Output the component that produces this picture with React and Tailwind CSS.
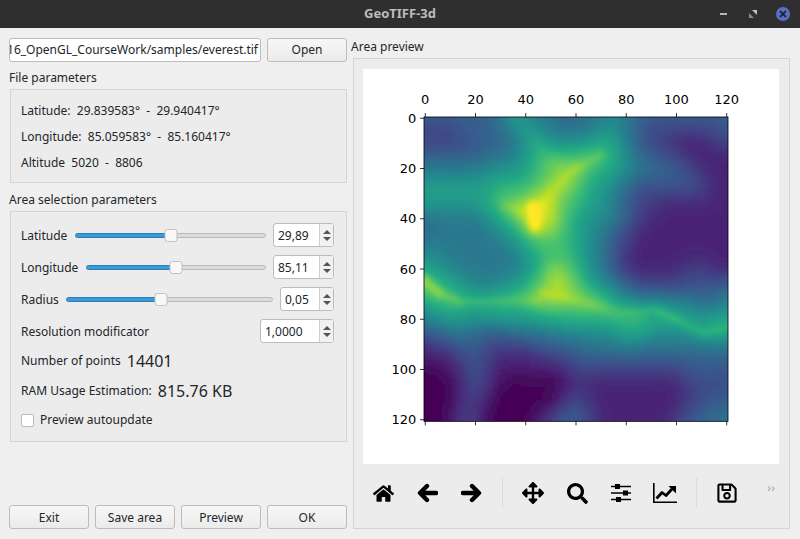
import React from 'react';
import { FaHome, FaArrowsAlt, FaSearch, FaRegSave } from 'react-icons/fa';

const Button = ({ children, className = '' }) => (
  <button className={`h-[24px] w-[80px] rounded-[3px] border border-[#bcbcbc] bg-gradient-to-b from-[#f7f7f7] to-[#ebebeb] text-[12px] text-[#232629] ${className}`}>
    {children}
  </button>
);

const SpinBox = ({ value, width }) => (
  <div className={`flex h-[24px] shrink-0 items-stretch rounded-[3px] border border-[#bcbcbc] bg-white ${width}`}>
    <div className="flex flex-1 items-center pl-[4px] pt-[1px] text-[12px]">{value}</div>
    <div className="flex w-[14px] flex-col items-center justify-center gap-[3px] border-l border-[#cfcfcf] bg-[#f1f1f1]">
      <div className="h-0 w-0 border-x-[4px] border-b-[4px] border-x-transparent border-b-[#555]" />
      <div className="h-0 w-0 border-x-[4px] border-t-[4px] border-x-transparent border-t-[#555]" />
    </div>
  </div>
);

const Slider = ({ percent }) => (
  <div className="relative h-[5px] flex-1 rounded-full border border-[#b9b9b9] bg-[#dcdcdc]">
    <div className="h-full rounded-full bg-[#3d9ad8] outline outline-1 outline-[#2a7cb4]" style={{ width: `${percent}%` }} />
    <div
      className="absolute top-[-5px] h-[13px] w-[13px] -translate-x-1/2 rounded-[3px] border border-[#c0c0c0] bg-[#f8f8f8]"
      style={{ left: `${percent}%` }}
    />
  </div>
);

const SliderRow = ({ label, percent, value, width, gap }) => (
  <div className="flex h-[32px] items-center">
    <span className={`pt-[2px] ${gap}`}>{label}</span>
    <Slider percent={percent} />
    <div className="w-[7px]" />
    <SpinBox value={value} width={width} />
  </div>
);

const ticks = [0, 20, 40, 60, 80, 100, 120];

const viridis = ['#440154', '#482475', '#414487', '#355f8d', '#2a788e', '#21918c', '#22a884', '#44bf70', '#7ad151', '#bddf26', '#fde725'];

// height values read off the reference, one digit every 5 data units
const rawHeights = [
  '3333334554433445433333333',
  '2223334455444455432222223',
  '2222333456555566432211122',
  '3333334456767786533221111',
  '4444455567789766544332111',
  '5555556667898665433333211',
  '6666667778987655322222211',
  '55555' + '6789a' + '97765' + '43221' + '11111',
  '444445679aa76555321111111',
  '3444445679876543211111111',
  '4444444567776543211111111',
  '5544444456776543111111111',
  '6554444456887543111112211',
  '8665545567897654322222323',
  '7876556678998765433333334',
  '5677777778878887666655445',
  '4555455555666666776666566',
  '3344433444455555665555676',
  '1223322223333444544444444',
  '1112321111223333333333333',
  '0011311111112222222223333',
  '0001320000002111111112222',
  '0001210000012111111112233',
  '0002200000123211111112333',
  '0002200001233211111123344',
].map((row) => row.split('').map((c) => parseInt(c, 16)));

const clampIdx = (i) => Math.max(0, Math.min(24, i));

// soften the hand read digits so no stairs show
const heights = rawHeights.map((row, y) =>
  row.map((_, x) => {
    let sum = 0;
    let weight = 0;
    for (let dy = -1; dy <= 1; dy++) {
      for (let dx = -1; dx <= 1; dx++) {
        const w = (dx === 0 ? 2 : 1) * (dy === 0 ? 2 : 1);
        sum += rawHeights[clampIdx(y + dy)][clampIdx(x + dx)] * w;
        weight += w;
      }
    }
    return sum / weight;
  })
);

// sharp ridges on top: x1, y1, x2, y2, amount, spread, all in crop pixels
const ridges = [
  [320, 350, 400, 375, 0.6, 16],
  [400, 375, 500, 250, 0.5, 16],
  [500, 250, 600, 200, 0.6, 12],
  [400, 355, 405, 410, 1.6, 15],
  [460, 540, 470, 610, 0.3, 18],
  [430, 610, 570, 640, 0.6, 13],
  [570, 640, 650, 670, 0.6, 14],
  [73, 570, 120, 610, 1.3, 12],
  [120, 610, 180, 635, 0.9, 10],
  [180, 635, 420, 630, 0.6, 11],
  [650, 670, 770, 660, 0.6, 11],
  [770, 660, 915, 730, 0.9, 12],
  [915, 730, 985, 710, 0.6, 12],
  [350, 90, 470, 230, 0.4, 22],
];

const ridgeHeight = (px, py) => {
  let best = 0;
  ridges.forEach(([x1, y1, x2, y2, amount, spread]) => {
    const dx = x2 - x1;
    const dy = y2 - y1;
    const t = Math.max(0, Math.min(1, ((px - x1) * dx + (py - y1) * dy) / (dx * dx + dy * dy)));
    const ex = px - (x1 + dx * t);
    const ey = py - (y1 + dy * t);
    best = Math.max(best, amount * Math.exp(-(ex * ex + ey * ey) / (2 * spread * spread)));
  });
  return best;
};

const catmull = (a, b, c, d, t) =>
  0.5 * (2 * b + (c - a) * t + (2 * a - 5 * b + 4 * c - d) * t * t + (3 * b - a - 3 * c + d) * t * t * t);

const sampleHeight = (x, y) => {
  const ix = Math.floor(x);
  const iy = Math.floor(y);
  const rows = [-1, 0, 1, 2].map((dy) => {
    const r = heights[clampIdx(iy + dy)];
    return catmull(r[clampIdx(ix - 1)], r[clampIdx(ix)], r[clampIdx(ix + 1)], r[clampIdx(ix + 2)], x - ix);
  });
  return catmull(rows[0], rows[1], rows[2], rows[3], y - iy);
};

const hexToRgb = (hex) => [1, 3, 5].map((i) => parseInt(hex.slice(i, i + 2), 16));

const colorAt = (v) => {
  const value = Math.max(0, Math.min(10, v));
  const i = Math.min(9, Math.floor(value));
  const a = hexToRgb(viridis[i]);
  const b = hexToRgb(viridis[i + 1]);
  const t = value - i;
  return `rgb(${a.map((n, k) => Math.round(n + (b[k] - n) * t)).join(',')})`;
};

const CELLS = 100;
const cells = [];
for (let row = -4; row < CELLS + 4; row++) {
  for (let col = -4; col < CELLS + 4; col++) {
    const fx = Math.max(0, Math.min(1, (col + 0.5) / CELLS));
    const fy = Math.max(0, Math.min(1, (row + 0.5) / CELLS));
    const v = sampleHeight(fx * 24, fy * 24) + ridgeHeight(73 + fx * 912, 80 + fy * 913);
    cells.push({ key: `${row}-${col}`, x: col, y: row, fill: colorAt(v) });
  }
}

// chart coordinates are those of a 3x crop of the picture
const Heatmap = () => {
  const size = 912 / CELLS;
  return (
    <svg viewBox="0 0 1248 1185" className="block h-[395px] w-[416px] shrink-0">
      <defs>
        <filter id="soft" x="-2%" y="-2%" width="104%" height="104%"><feGaussianBlur stdDeviation="5" /></filter>
        <clipPath id="plot"><rect x="183" y="144" width="912" height="913" /></clipPath>
      </defs>
      <rect width="1248" height="1185" fill="#ffffff" />
      <g clipPath="url(#plot)">
        <g filter="url(#soft)" shapeRendering="crispEdges">
          {cells.map((c) => (
            <rect key={c.key} x={183 + c.x * size - 0.5} y={144 + c.y * size - 0.5} width={size + 1} height={size + 1} fill={c.fill} />
          ))}
        </g>
      </g>
      <rect x="183" y="144" width="912" height="913" fill="none" stroke="#000" strokeWidth="2.4" />
      {ticks.map((t) => {
        const p = (t + 0.5) * (912 / 121);
        return (
          <g key={t} fontFamily="'DejaVu Sans', sans-serif" fontSize="39" fill="#000">
            <line x1={183 + p} x2={183 + p} y1="144" y2="132" stroke="#000" strokeWidth="2.4" />
            <line x1={183 + p} x2={183 + p} y1="1057" y2="1069" stroke="#000" strokeWidth="2.4" />
            <line x1="171" x2="183" y1={144 + p} y2={144 + p} stroke="#000" strokeWidth="2.4" />
            <text x={183 + p} y="105" textAnchor="middle">{t}</text>
            <text x="160" y={144 + p + 14} textAnchor="end">{t}</text>
          </g>
        );
      })}
    </svg>
  );
};

const ArrowIcon = ({ flip }) => (
  <svg width="21" height="20" viewBox="0 0 21 20" className={flip ? 'scale-x-[-1]' : ''}>
    <path d="M10 3 L3 10 L10 17 M4 10 H19" fill="none" stroke="#000" strokeWidth="4.4" strokeLinejoin="round" strokeLinecap="round" />
  </svg>
);

const SlidersIcon = () => (
  <svg width="20" height="18" viewBox="0 0 20 18">
    <path d="M0 2.5 H20 M0 9 H20 M0 15.5 H20" stroke="#000" strokeWidth="1.6" />
    <rect x="4" y="0" width="5" height="5" fill="#000" />
    <rect x="12" y="6.5" width="5" height="5" fill="#000" />
    <rect x="5" y="13" width="5" height="5" fill="#000" />
  </svg>
);

const ChartIcon = () => (
  <svg width="24" height="20" viewBox="0 0 24 20">
    <path d="M0.8 0 V19.2 H24" fill="none" stroke="#000" strokeWidth="1.6" />
    <path d="M3.5 15.5 L9 9.5 L13 12.5 L19 6" fill="none" stroke="#000" strokeWidth="2.8" strokeLinejoin="round" />
    <path d="M15.5 3 H23 V10.5 Z" fill="#000" />
  </svg>
);

const ToolButton = ({ children }) => (
  <div className="flex h-[44px] w-[44px] shrink-0 items-center justify-center text-black">{children}</div>
);

const ToolSeparator = () => (
  <div className="flex w-[18px] shrink-0 justify-center">
    <div className="h-[30px] w-px bg-[#dcdcdc]" />
  </div>
);

export default function App() {
  return (
    <div className="flex h-[539px] w-[800px] flex-col overflow-hidden bg-[#efefef] text-[12px] text-[#232629] [font-family:'Noto_Sans',sans-serif]">
      {/* Title bar */}
      <div className="relative flex h-[28px] shrink-0 items-center justify-center bg-[#2f2f2f] text-[13px] font-bold text-[#bdbdbd]">
        GeoTIFF-3d
        <div className="absolute right-[10px] top-[7px] flex h-[14px] items-center gap-[16px]">
          <div className="flex w-[14px] justify-center"><div className="h-[2px] w-[7px] bg-[#b5b5b5]" /></div>
          <div className="flex w-[14px] justify-center">
            <svg width="8" height="8" viewBox="0 0 8 8">
              <polygon points="3,0 8,0 8,5" fill="#c4c4c4" />
              <polygon points="0,3 0,8 5,8" fill="#8a8a8a" />
            </svg>
          </div>
          <div className="flex h-[14px] w-[14px] items-center justify-center rounded-full bg-[#5a6fc0]">
            <svg width="8" height="8" viewBox="0 0 8 8">
              <path d="M1 1 L7 7 M7 1 L1 7" stroke="#20263f" strokeWidth="1.8" />
            </svg>
          </div>
        </div>
      </div>

      <div className="flex min-h-0 flex-1">
        {/* Left column */}
        <div className="ml-[9px] flex w-[338px] shrink-0 flex-col pb-[10px] pt-[10px]">
          <div className="flex gap-[6px]">
            <div className="flex h-[24px] w-[252px] items-center justify-end overflow-hidden whitespace-nowrap rounded-[3px] border border-[#bcbcbc] bg-white pr-[2px] text-[12px]">
              16_OpenGL_CourseWork/samples/everest.tif
            </div>
            <Button>Open</Button>
          </div>

          <div className="mt-[6px] flex h-[18px] items-center pt-[2px]">File parameters</div>
          <div className="ml-px mt-[3px] flex h-[94px] flex-col justify-center gap-[8px] border border-[#d4d4d4] bg-[#ececec] pl-[10px] pt-[2px]">
            <div className="h-[18px] leading-[18px] whitespace-pre">Latitude:  29.839583°  -  29.940417°</div>
            <div className="h-[18px] leading-[18px] whitespace-pre">Longitude:  85.059583°  -  85.160417°</div>
            <div className="h-[18px] leading-[18px] whitespace-pre">Altitude  5020  -  8806</div>
          </div>

          <div className="mt-[7px] flex h-[18px] items-center pt-[2px]">Area selection parameters</div>
          <div className="ml-px mt-[3px] flex h-[231px] flex-col border border-[#d4d4d4] bg-[#ececec] pl-[10px] pr-[12px] pt-[7px]">
            <SliderRow label="Latitude" percent={50} value="29,89" width="w-[61px]" gap="w-[54px]" />
            <SliderRow label="Longitude" percent={50} value="85,11" width="w-[61px]" gap="w-[65px]" />
            <SliderRow label="Radius" percent={46} value="0,05" width="w-[54px]" gap="w-[45px]" />
            <div className="flex h-[32px] items-center justify-between">
              <span className="pt-[2px]">Resolution modificator</span>
              <SpinBox value="1,0000" width="w-[74px]" />
            </div>
            <div className="flex h-[28px] items-center gap-[6px]">
              <span>Number of points</span>
              <span className="text-[16px]">14401</span>
            </div>
            <div className="flex h-[32px] items-center gap-[6px]">
              <span>RAM Usage Estimation:</span>
              <span className="text-[16px]">815.76 KB</span>
            </div>
            <div className="flex h-[26px] items-center gap-[6px]">
              <div className="h-[13px] w-[13px] rounded-[2px] border border-[#bcbcbc] bg-white" />
              <span>Preview autoupdate</span>
            </div>
          </div>

          <div className="mt-auto flex gap-[6px]">
            <Button className="pt-[2px]">Exit</Button>
            <Button className="pt-[2px]">Save area</Button>
            <Button className="pt-[2px]">Preview</Button>
            <Button className="pt-[2px]">OK</Button>
          </div>
        </div>

        {/* Right column */}
        <div className="ml-[4px] flex w-[439px] shrink-0 flex-col pb-[10px] pt-[10px]">
          <div className="flex h-[20px] items-center pb-[2px]">Area preview</div>
          <div className="ml-[2px] flex flex-1 flex-col border border-[#d4d4d4] bg-[#ececec] pl-[9px] pt-[10px]">
            <Heatmap />
            <div className="-ml-[2px] mt-[7px] flex items-center">
              <ToolButton><FaHome size={21} /></ToolButton>
              <ToolButton><ArrowIcon /></ToolButton>
              <ToolButton><ArrowIcon flip /></ToolButton>
              <ToolSeparator />
              <ToolButton><FaArrowsAlt size={22} /></ToolButton>
              <ToolButton><FaSearch size={21} /></ToolButton>
              <ToolButton><SlidersIcon /></ToolButton>
              <ToolButton><ChartIcon /></ToolButton>
              <ToolSeparator />
              <ToolButton><FaRegSave size={22} /></ToolButton>
              <div className="mb-[10px] ml-[4px] flex w-[36px] shrink-0 justify-center text-[13px] text-[#aaa]">››</div>
            </div>
          </div>
        </div>
      </div>
    </div>
  );
}
